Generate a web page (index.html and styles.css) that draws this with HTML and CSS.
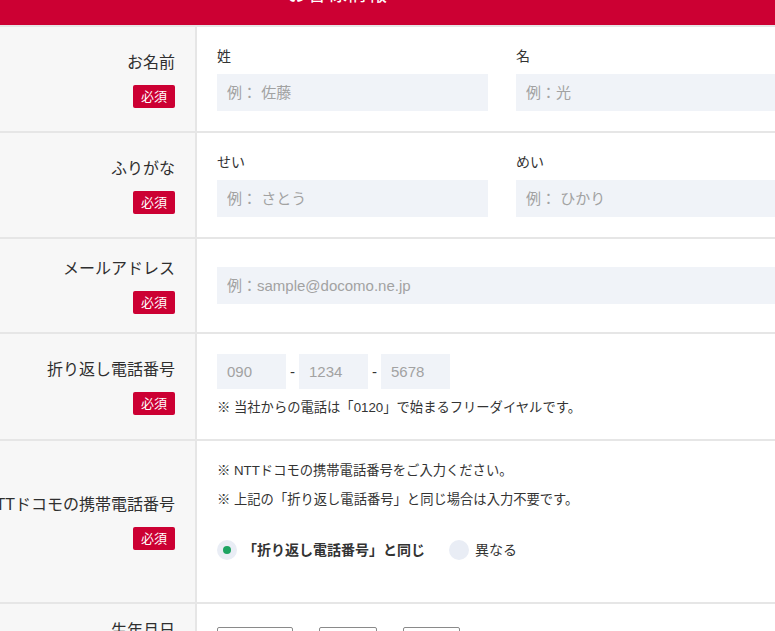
FILE: index.html
```html
<!DOCTYPE html>
<html lang="ja">
<head>
<meta charset="utf-8">
<title>お客様情報</title>
<link rel="stylesheet" href="styles.css">
</head>
<body>
<div class="page">
  <div class="page-header"><h1 class="page-title">お客様情報</h1></div>
  <div class="form">
    <div class="row">
      <div class="row-label"><span class="label-text">お名前</span><span class="badge">必須</span></div>
      <div class="row-body row-body-name">
        <div class="name-fields">
          <div class="name-field">
            <div class="sub-label">姓</div>
            <input class="text-input" type="text" placeholder="例： 佐藤">
          </div>
          <div class="name-field">
            <div class="sub-label">名</div>
            <input class="text-input" type="text" placeholder="例：光">
          </div>
        </div>
      </div>
    </div>
    <div class="row">
      <div class="row-label"><span class="label-text">ふりがな</span><span class="badge">必須</span></div>
      <div class="row-body row-body-name">
        <div class="name-fields">
          <div class="name-field">
            <div class="sub-label">せい</div>
            <input class="text-input" type="text" placeholder="例： さとう">
          </div>
          <div class="name-field">
            <div class="sub-label">めい</div>
            <input class="text-input" type="text" placeholder="例： ひかり">
          </div>
        </div>
      </div>
    </div>
    <div class="row">
      <div class="row-label"><span class="label-text">メールアドレス</span><span class="badge">必須</span></div>
      <div class="row-body row-body-mail">
        <input class="text-input" type="text" placeholder="例：sample@docomo.ne.jp">
      </div>
    </div>
    <div class="row">
      <div class="row-label"><span class="label-text">折り返し電話番号</span><span class="badge">必須</span></div>
      <div class="row-body row-body-tel">
        <div class="tel-fields">
          <input class="text-input tel-input" type="text" placeholder="090">
          <span class="tel-sep">-</span>
          <input class="text-input tel-input" type="text" placeholder="1234">
          <span class="tel-sep">-</span>
          <input class="text-input tel-input" type="text" placeholder="5678">
        </div>
        <p class="note">※ 当社からの電話は「0120」で始まるフリーダイヤルです。</p>
      </div>
    </div>
    <div class="row">
      <div class="row-label"><span class="label-text">NTTドコモの携帯電話番号</span><span class="badge">必須</span></div>
      <div class="row-body row-body-mobile">
        <p class="note note-first">※ NTTドコモの携帯電話番号をご入力ください。</p>
        <p class="note">※ 上記の「折り返し電話番号」と同じ場合は入力不要です。</p>
        <div class="radio-group">
          <label class="radio"><span class="radio-mark is-checked"></span><span class="radio-label radio-label-strong">「折り返し電話番号」と同じ</span></label>
          <label class="radio"><span class="radio-mark"></span><span class="radio-label">異なる</span></label>
        </div>
      </div>
    </div>
    <div class="row">
      <div class="row-label"><span class="label-text">生年月日</span><span class="badge">必須</span></div>
      <div class="row-body row-body-date">
        <div class="date-fields">
          <span class="select select-year"></span><span class="date-unit">年</span>
          <span class="select select-month"></span><span class="date-unit">月</span>
          <span class="select select-day"></span><span class="date-unit">日</span>
        </div>
      </div>
    </div>
  </div>
</div>
</body>
</html>
```
FILE: styles.css
```css
html, body {
  margin: 0;
  padding: 0;
  overflow: hidden;
  background: #fff;
}
body {
  font-family: "Liberation Sans", "Noto Sans CJK JP", sans-serif;
  color: #333;
}
.page-header {
  height: 25px;
  overflow: hidden;
  background: #cc0033;
  border-bottom: 2px solid #e6e6e6;
}
.page-title {
  margin: -16px 0 0 287px;
  font-size: 20px;
  line-height: 20px;
  font-weight: normal;
  color: #fff;
  white-space: nowrap;
}
.row {
  display: flex;
  border-bottom: 2px solid #e6e6e6;
}
.row-label {
  flex: 0 0 197px;
  width: 197px;
  min-width: 0;
  box-sizing: border-box;
  background: #f7f7f7;
  border-right: 2px solid #e6e6e6;
  padding-right: 20px;
  display: flex;
  flex-direction: column;
  align-items: flex-end;
  justify-content: center;
}
.label-text {
  font-size: 16px;
  line-height: 24px;
  white-space: nowrap;
  color: #2f2f2f;
}
.badge {
  margin-top: 10px;
  background: #cc0033;
  color: #fff;
  font-size: 13px;
  line-height: 23px;
  padding: 0 8px;
  border-radius: 2px;
}
.row-body {
  flex: 1;
  min-width: 0;
  padding-left: 20px;
}
.row-body-name { padding-top: 19px; padding-bottom: 20px; }
.row-body-mail { padding-top: 28px; padding-bottom: 28px; }
.row-body-tel { padding-top: 20px; padding-bottom: 21px; }
.row-body-mobile { padding-top: 20px; padding-bottom: 42px; }
.row-body-date { padding-top: 23px; padding-bottom: 28px; }
.name-fields {
  display: flex;
  gap: 28px;
}
.name-field {
  flex: 0 0 271px;
}
.sub-label {
  font-size: 14px;
  line-height: 21px;
  margin-bottom: 7px;
}
.text-input {
  display: block;
  width: 100%;
  box-sizing: border-box;
  height: 37px;
  margin: 0;
  border: 0;
  border-radius: 0;
  background: #f0f3f8;
  padding: 0 10px;
  font-family: "Liberation Sans", "Noto Sans CJK JP", sans-serif;
  font-size: 15px;
  color: #333;
  outline: none;
}
.text-input::placeholder {
  color: #a2a2a2;
  opacity: 1;
}
.tel-fields {
  display: flex;
  align-items: center;
}
.tel-input {
  width: 69px;
  height: 35px;
}
.tel-sep {
  width: 13px;
  text-align: center;
  font-size: 15px;
}
.note {
  margin: 9px 0 0;
  font-size: 13.3px;
  line-height: 20px;
  white-space: nowrap;
}
.note-first {
  margin-top: 0;
}
.radio-group {
  margin-top: 30px;
  display: flex;
  align-items: center;
  gap: 24px;
}
.radio {
  display: flex;
  align-items: center;
  gap: 6px;
  font-size: 14px;
  line-height: 20px;
  white-space: nowrap;
}
.radio-mark {
  width: 20px;
  height: 20px;
  border-radius: 50%;
  background: #e9edf5;
  display: flex;
  align-items: center;
  justify-content: center;
}
.radio-mark.is-checked::after {
  content: "";
  width: 8px;
  height: 8px;
  border-radius: 50%;
  background: #1da462;
}
.radio-label-strong {
  font-weight: bold;
}
.date-fields {
  display: flex;
  align-items: center;
}
.select {
  height: 36px;
  box-sizing: border-box;
  border: 1px solid #8a8a8a;
  border-radius: 2px;
}
.select-year { width: 76px; }
.select-month { width: 58px; }
.select-day { width: 57px; }
.date-unit {
  width: 26px;
  text-align: center;
  font-size: 14px;
}
```
